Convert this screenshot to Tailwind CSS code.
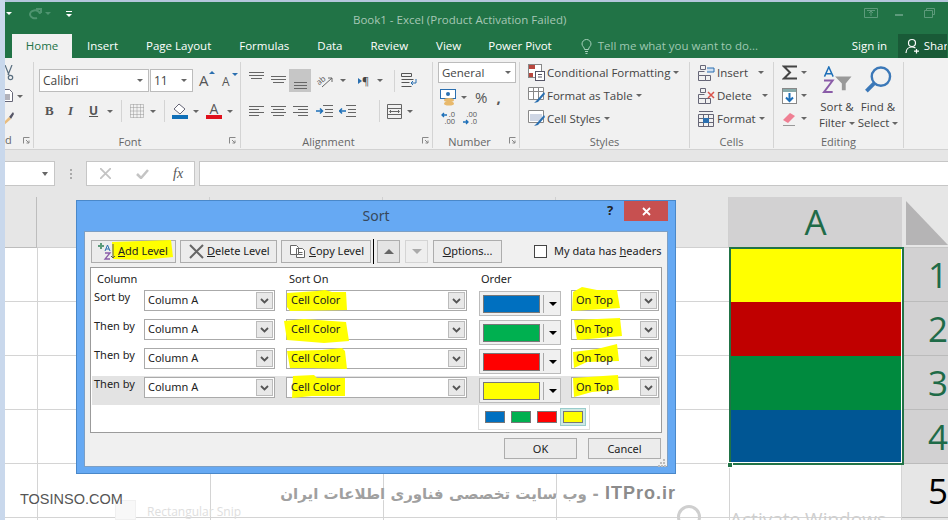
<!DOCTYPE html>
<html lang="en">
<head>
    <meta charset="UTF-8">
    <title>Book1 - Excel</title>
    <script src="https://cdn.jsdelivr.net/npm/@tailwindcss/browser@4"></script>
</head>
<body class="w-[948px] h-[520px] overflow-hidden bg-[#c9d8ec] font-['Open_Sans',sans-serif]">
<div class="relative flex w-[948px] h-[520px] overflow-hidden">
    <!-- desktop strip on the left -->
    <div class="w-[5px] shrink-0 bg-[#c9d8ec]"></div>

    <div class="w-[943px] shrink-0 flex flex-col">
        <div class="h-[2px] shrink-0 bg-[#b4c6dc]"></div>

        <!-- title bar -->
        <div class="h-[32px] shrink-0 bg-[#217346] flex items-center relative">
            <span class="ml-[1px] mt-[-9px] w-0 h-0 border-x-[3px] border-x-transparent border-t-[3px] border-t-white"></span>
            <svg class="ml-[15px] mt-[-9px]" width="15" height="12" viewBox="0 0 15 12" fill="none" stroke="#4f9470" stroke-width="2"><path d="M13 6a5 4 0 1 0-3 4M9 1h5v4"/></svg>
            <span class="ml-[3px] mt-[-9px] w-0 h-0 border-x-[3px] border-x-transparent border-t-[3px] border-t-[#4f9470]"></span>
            <div class="ml-[15px] mt-[-9px] flex flex-col gap-[2px]"><div class="w-[6px] h-[1px] bg-white"></div><span class="w-0 h-0 border-x-[3px] border-x-transparent border-t-[3px] border-t-white"></span></div>
            <div class="ml-[281px] mt-[3px] text-[11.5px] leading-none text-[#a6c7b5] whitespace-nowrap w-[214px]">Book1 - Excel (Product Activation Failed)</div>
            <svg class="ml-[297px] mt-[-10px]" width="14" height="11" viewBox="0 0 14 11" fill="none" stroke="#5d9a7b"><path d="M.5.5h13v9H.5zM7 8V3M5 5l2-2 2 2M3 2.500h8"/></svg>
            <div class="ml-[17px] mt-[-6px] w-[8px] h-[2px] bg-[#5d9a7b]"></div>
            <svg class="ml-[21px] mt-[-10px]" width="11" height="10" viewBox="0 0 11 10" fill="none" stroke="#5d9a7b"><path d="M.5 2.500h8v7h-8zM2.500 2.500V.5h8v6H8.500"/></svg>
        </div>

        <!-- tabs -->
        <div class="h-[24px] shrink-0 bg-[#217346] flex items-stretch text-[11.5px] text-white whitespace-nowrap">
            <div class="ml-[7px] w-[60px] shrink-0 bg-[#f1f1f1] text-[#217346] flex items-center justify-center">Home</div>
            <div class="ml-[15px] shrink-0 flex items-center">Insert</div>
            <div class="ml-[28px] shrink-0 flex items-center">Page Layout</div>
            <div class="ml-[28px] shrink-0 flex items-center">Formulas</div>
            <div class="ml-[28px] shrink-0 flex items-center">Data</div>
            <div class="ml-[28px] shrink-0 flex items-center">Review</div>
            <div class="ml-[28px] shrink-0 flex items-center">View</div>
            <div class="ml-[27px] shrink-0 flex items-center">Power Pivot</div>
            <svg class="ml-[29px] shrink-0 self-center" width="11" height="15" viewBox="0 0 11 15" fill="none" stroke="#a6d0bb"><path d="M3.500 10.500C3.500 8 1 7.500 1 5a4.500 4.500 0 0 1 9 0c0 2.500-2.500 3-2.500 5.500zM4 12.500h3M4.500 14.500h2"/></svg>
            <div class="ml-[6px] w-[160px] shrink-0 flex items-center text-[#9fc8b2]">Tell me what you want to do...</div>
            <div class="ml-[94px] w-[36px] shrink-0 flex items-center">Sign in</div>
            <div class="ml-[10px] w-[49px] shrink-0 bg-[#195a37] flex items-center pl-[7px] overflow-hidden">
                <svg class="shrink-0" width="15" height="16" viewBox="0 0 15 16" fill="none" stroke="white" stroke-width="1.200"><circle cx="7" cy="5" r="3.500"/><path d="M1 15c0-3.500 2.500-6 6-6 1.500 0 2.500.5 3.500 1M11.500 11v4.500M9 13.200h5"/></svg>
                <span class="ml-[4px]">Share</span>
            </div>
        </div>

        <!-- ribbon -->
        <div class="h-[92px] shrink-0 bg-[#f1f1f1] border-b border-[#d2d2d2] flex pt-[4px] text-[11.5px] leading-[14px] text-[#444] whitespace-nowrap">
            <!-- clipboard, cut off by the window edge -->
            <div class="relative w-[29px] h-[86px] border-r border-[#d4d4d4] overflow-hidden">
                <svg class="absolute left-[-1px] top-[3px]" width="10" height="16" viewBox="0 0 10 16" fill="none" stroke="#5a6f80" stroke-width="1.200"><path d="M1 0l4 10M8 0L4 10"/><circle cx="6.500" cy="12.500" r="2.200"/></svg>
                <svg class="absolute left-[-3px] top-[27px]" width="11" height="13" viewBox="0 0 11 13" fill="#fff" stroke="#667"><path d="M.5.5h7l3 3v9H.5zM3 6h5M3 8h5M3 10h5"/></svg>
                <span class="absolute left-[12px] top-[33px] w-0 h-0 border-x-[3px] border-x-transparent border-t-[3px] border-t-[#666]"></span>
                <svg class="absolute left-[-1px] top-[49px]" width="10" height="14" viewBox="0 0 10 14"><path d="M9 1L5 6l2 2 3-5z" fill="#556"/><path d="M5 6L0 11v3l7-6z" fill="#e9bd7e"/></svg>
                <div class="absolute left-0 bottom-[1px] text-[#666] text-[11px]">d</div>
                <svg class="absolute left-[18px] bottom-[4px]" width="7" height="7" viewBox="0 0 7 7" fill="none" stroke="#888"><path d="M.5 6.500v-6h6M3 3l3 3M6 3.500V6H3.500"/></svg>
            </div>

            <!-- font -->
            <div class="relative w-[207px] h-[86px] border-r border-[#d4d4d4] flex flex-col">
                <div class="flex items-center mt-[7px] ml-[5px] h-[23px]">
                    <div class="w-[110px] h-[23px] bg-white border border-[#bcbcbc] flex items-center pl-[3px] text-[12px]">Calibri<span class="ml-auto mr-[5px] w-0 h-0 border-x-[3px] border-x-transparent border-t-[3px] border-t-[#666]"></span></div>
                    <div class="w-[43px] h-[23px] ml-[1px] bg-white border border-[#bcbcbc] flex items-center pl-[3px] text-[12px]">11<span class="ml-auto mr-[5px] w-0 h-0 border-x-[3px] border-x-transparent border-t-[3px] border-t-[#666]"></span></div>
                    <div class="relative ml-[6px] w-[16px] text-[15px] leading-none text-[#555]">A<span class="absolute right-[0px] top-[-2px] w-0 h-0 border-x-[3px] border-x-transparent border-b-[3px] border-b-[#2a6fb0]"></span></div>
                    <div class="relative ml-[7px] w-[14px] mt-[2px] text-[12px] leading-none text-[#555]">A<span class="absolute right-[-2px] top-[-3px] w-0 h-0 border-x-[3px] border-x-transparent border-t-[3px] border-t-[#2a6fb0]"></span></div>
                </div>
                <div class="flex items-center mt-[8px] h-[22px] text-[#555]">
                    <div class="ml-[11px] w-[8px] font-['Liberation_Serif',serif] font-bold text-[13px]">B</div>
                    <div class="ml-[15px] w-[6px] font-['Liberation_Serif',serif] italic font-bold text-[13px]">I</div>
                    <div class="ml-[15px] w-[9px] font-bold text-[12px] underline">U</div>
                    <span class="ml-[9px] w-0 h-0 border-x-[3px] border-x-transparent border-t-[3px] border-t-[#666]"></span>
                    <div class="ml-[8px] w-[1px] h-[22px] bg-[#d4d4d4]"></div>
                    <svg class="ml-[8px]" width="14" height="14" viewBox="0 0 14 14" fill="none" stroke="#999" stroke-dasharray="1 1"><path d="M.5.500h13v13H.500zM7 .5v13M.5 7h13M3.500.5v13M10.500.5v13M.5 3.500h13M.5 10.500h13"/></svg>
                    <span class="ml-[6px] w-0 h-0 border-x-[3px] border-x-transparent border-t-[3px] border-t-[#666]"></span>
                    <div class="ml-[8px] w-[1px] h-[22px] bg-[#d4d4d4]"></div>
                    <svg class="ml-[7px]" width="16" height="16" viewBox="0 0 16 16"><path d="M7 1l6 5-5 5-6-5z" fill="#fff" stroke="#667"/><rect y="12" width="16" height="4" fill="#0f6fb7"/></svg>
                    <span class="ml-[5px] w-0 h-0 border-x-[3px] border-x-transparent border-t-[3px] border-t-[#666]"></span>
                    <div class="ml-[7px] w-[16px] flex flex-col items-center"><span class="text-[14px] leading-[12px] text-[#555]">A</span><div class="w-[16px] h-[4px] bg-[#e0101c]"></div></div>
                    <span class="ml-[5px] w-0 h-0 border-x-[3px] border-x-transparent border-t-[3px] border-t-[#666]"></span>
                </div>
                <div class="mt-auto mb-[-1px] text-center pr-[14px] text-[#666] text-[11px]">Font</div>
                <svg class="absolute left-[195px] bottom-[4px]" width="7" height="7" viewBox="0 0 7 7" fill="none" stroke="#888"><path d="M.5 6.500v-6h6M3 3l3 3M6 3.500V6H3.500"/></svg>
            </div>

            <!-- alignment -->
            <div class="relative w-[192px] h-[86px] border-r border-[#d4d4d4] flex flex-col">
                <div class="flex items-center mt-[7px] h-[23px]">
                    <svg class="ml-[8px]" width="15" height="23" viewBox="0 0 15 23" fill="none" stroke="#666"><path d="M0 3.500h15M0 6.500h15M2 9.500h11"/></svg>
                    <svg class="ml-[7px]" width="15" height="23" viewBox="0 0 15 23" fill="none" stroke="#666"><path d="M0 7.500h15M0 10.500h15M2 13.500h11"/></svg>
                    <div class="ml-[3px] w-[22px] h-[23px] bg-[#c6c6c6] flex justify-center"><svg width="15" height="23" viewBox="0 0 15 23" fill="none" stroke="#666"><path d="M1 13.500h13M1 16.500h13M1 19.500h13"/></svg></div>
                    <svg class="ml-[5px]" width="18" height="15" viewBox="0 0 18 15" fill="none" stroke="#666"><text x="0" y="10" font-size="8" fill="#555" stroke="none" transform="rotate(-40 5 7)">ab</text><path d="M6 14L16 5M16 5v4M16 5h-4"/></svg>
                    <span class="ml-[6px] w-0 h-0 border-x-[3px] border-x-transparent border-t-[3px] border-t-[#666]"></span>
                    <div class="ml-[12px] flex items-center text-[11px] leading-none text-[#444]"><span class="w-0 h-0 border-y-[3px] border-y-transparent border-l-[4px] border-l-[#2a6fb0]"></span>¶</div>
                    <span class="ml-[8px] w-0 h-0 border-x-[3px] border-x-transparent border-t-[3px] border-t-[#666]"></span>
                    <div class="ml-[11px] w-[1px] h-[22px] bg-[#d4d4d4]"></div>
                    <svg class="ml-[6px]" width="17" height="15" viewBox="0 0 17 15" fill="none" stroke="#555"><path d="M.5.5h10v3H.5zM.5 6.500h12M.5 9.500h8M.5 13.500h10" /><path d="M15 6v4h-5M12 8l-2 2 2 2" stroke="#2a6fb0"/></svg>
                </div>
                <div class="flex items-center mt-[8px] h-[22px]">
                    <svg class="ml-[8px]" width="15" height="11" viewBox="0 0 15 11" fill="none" stroke="#666"><path d="M0 .5h15M0 3.500h10M0 6.500h15M0 9.500h10"/></svg>
                    <svg class="ml-[7px]" width="15" height="11" viewBox="0 0 15 11" fill="none" stroke="#666"><path d="M0 .5h15M2 3.500h11M0 6.500h15M2 9.500h11"/></svg>
                    <svg class="ml-[7px]" width="15" height="11" viewBox="0 0 15 11" fill="none" stroke="#666"><path d="M0 .5h15M5 3.500h10M0 6.500h15M5 9.500h10"/></svg>
                    <svg class="ml-[8px]" width="17" height="12" viewBox="0 0 17 12" fill="none" stroke="#666"><path d="M7 .5h10M9 4.500h8M9 7.500h8M7 11.500h10"/><path d="M0 6h6M4 3.500L6.500 6 4 8.500" stroke="#1d6fb8" stroke-width="1.500"/></svg>
                    <svg class="ml-[6px]" width="17" height="12" viewBox="0 0 17 12" fill="none" stroke="#666"><path d="M7 .5h10M9 4.500h8M9 7.500h8M7 11.500h10"/><path d="M7 6H1M3 3.500L.5 6 3 8.500" stroke="#1d6fb8" stroke-width="1.500"/></svg>
                    <div class="ml-[23px] w-[1px] h-[22px] bg-[#d4d4d4]"></div>
                    <svg class="ml-[7px]" width="15" height="15" viewBox="0 0 15 15" fill="none" stroke="#666"><path d="M.5.500h14v14H.500zM.5 4.500h14M.5 10.500h14M3 7.500h9M4 6L2.500 7.500 4 9M11 6l1.500 1.500L11 9"/></svg>
                    <span class="ml-[5px] w-0 h-0 border-x-[3px] border-x-transparent border-t-[3px] border-t-[#666]"></span>
                </div>
                <div class="mt-auto mb-[-1px] text-center pr-[16px] text-[#666] text-[11px]">Alignment</div>
                <svg class="absolute left-[181px] bottom-[4px]" width="7" height="7" viewBox="0 0 7 7" fill="none" stroke="#888"><path d="M.5 6.500v-6h6M3 3l3 3M6 3.500V6H3.500"/></svg>
            </div>

            <!-- number -->
            <div class="relative w-[87px] h-[86px] border-r border-[#d4d4d4] flex flex-col">
                <div class="ml-[5px] w-[78px] h-[21px] bg-white border border-[#bcbcbc] flex items-center pl-[3px] text-[11.5px]">General<span class="ml-auto mr-[4px] w-0 h-0 border-x-[3px] border-x-transparent border-t-[3px] border-t-[#666]"></span></div>
                <div class="flex items-center h-[22px] mt-[3px]">
                    <svg class="ml-[7px]" width="17" height="17" viewBox="0 0 17 17"><rect x=".5" y=".5" width="15" height="9" fill="#fff" stroke="#2a6fb0"/><circle cx="8" cy="5" r="2" fill="#2a6fb0"/><ellipse cx="9" cy="11" rx="5" ry="2" fill="#e8b96c"/><ellipse cx="9" cy="14.500" rx="5" ry="2" fill="#e8b96c"/></svg>
                    <span class="ml-[4px] w-0 h-0 border-x-[3px] border-x-transparent border-t-[3px] border-t-[#666]"></span>
                    <div class="ml-[8px] text-[15px] leading-none text-[#555]">%</div>
                    <div class="ml-[9px] text-[15px] leading-none font-bold text-[#555]">,</div>
                </div>
                <div class="flex items-center h-[16px] mt-[2px] text-[7.5px] leading-[7px] text-[#555]">
                    <div class="ml-[8px] w-[14px] flex flex-col">
                        <div class="flex items-center justify-between"><svg width="6" height="6" viewBox="0 0 6 6" fill="none" stroke="#1d6fb8" stroke-width="1.300"><path d="M6 3H1M3 1L1 3l2 2"/></svg><span>.0</span></div>
                        <div class="text-right">.00</div>
                    </div>
                    <div class="ml-[8px] w-[14px] flex flex-col">
                        <div class="text-right">.00</div>
                        <div class="flex items-center justify-between"><svg width="6" height="6" viewBox="0 0 6 6" fill="none" stroke="#1d6fb8" stroke-width="1.300"><path d="M0 3h5M3 1l2 2-2 2"/></svg><span>.0</span></div>
                    </div>
                </div>
                <div class="mt-auto mb-[-1px] text-center pr-[13px] text-[#666] text-[11px]">Number</div>
                <svg class="absolute left-[76px] bottom-[4px]" width="7" height="7" viewBox="0 0 7 7" fill="none" stroke="#888"><path d="M.5 6.500v-6h6M3 3l3 3M6 3.500V6H3.500"/></svg>
            </div>

            <!-- styles -->
            <div class="w-[170px] h-[86px] border-r border-[#d4d4d4] flex flex-col pl-[8px]">
                <div class="flex items-center h-[23px] mt-[-1px]">
                    <svg width="17" height="17" viewBox="0 0 17 17"><rect x=".5" y=".5" width="13" height="13" fill="#fff" stroke="#888"/><rect x="1" y="1" width="6" height="4" fill="#b8473e"/><rect x="1" y="9" width="4" height="4" fill="#b8473e"/><rect x="7.500" y="7.500" width="9" height="9" fill="#fff" stroke="#556"/><path d="M10 10.500h4M10 13h4" stroke="#556"/></svg>
                    <span class="ml-[2px]">Conditional Formatting</span><span class="ml-[3px] w-0 h-0 border-x-[3px] border-x-transparent border-t-[3px] border-t-[#666]"></span>
                </div>
                <div class="flex items-center h-[23px]">
                    <svg width="17" height="17" viewBox="0 0 17 17"><path d="M.5.500h15v12H.500zM.5 4.500h15M5.500.5v12M10.500.5v12" fill="#fff" stroke="#888"/><path d="M16 5l-7 8-3 3 4-1 7-8z" fill="#2a6fb0"/></svg>
                    <span class="ml-[2px]">Format as Table</span><span class="ml-[3px] w-0 h-0 border-x-[3px] border-x-transparent border-t-[3px] border-t-[#666]"></span>
                </div>
                <div class="flex items-center h-[23px]">
                    <svg width="17" height="17" viewBox="0 0 17 17"><path d="M.5.500h15v12H.500z" fill="#fff" stroke="#888"/><rect x="2" y="4" width="12" height="7" fill="#cfd6e4"/><path d="M16 5l-7 8-3 3 4-1 7-8z" fill="#2a6fb0"/></svg>
                    <span class="ml-[2px]">Cell Styles</span><span class="ml-[3px] w-0 h-0 border-x-[3px] border-x-transparent border-t-[3px] border-t-[#666]"></span>
                </div>
                <div class="mt-auto mb-[-1px] text-center pr-[8px] text-[#666] text-[11px]">Styles</div>
            </div>

            <!-- cells -->
            <div class="w-[84px] h-[86px] border-r border-[#d4d4d4] flex flex-col pl-[8px]">
                <div class="flex items-center h-[23px] mt-[-1px]">
                    <svg width="17" height="16" viewBox="0 0 17 16" fill="none" stroke="#667"><path d="M2.500.5h5v4h-5zM.5 10.500h7v5h-7zM7.500 10.500h5v5h-5zM.5 10.500v-4h6"/><path d="M9 3h7v4H9" fill="#cfe0f2" stroke="#2a6fb0"/></svg>
                    <span class="ml-[2px]">Insert</span><span class="ml-[10px] w-0 h-0 border-x-[3px] border-x-transparent border-t-[3px] border-t-[#666]"></span>
                </div>
                <div class="flex items-center h-[23px]">
                    <svg width="17" height="16" viewBox="0 0 17 16" fill="none" stroke="#667"><path d="M2.500.5h5v4h-5zM.5 10.500h7v5h-7zM7.500 10.500h5v5h-5zM.5 10.500v-4h6"/><path d="M10 4l6 6M16 4l-6 6" stroke="#d9534a" stroke-width="1.500"/></svg>
                    <span class="ml-[2px]">Delete</span><span class="ml-[10px] w-0 h-0 border-x-[3px] border-x-transparent border-t-[3px] border-t-[#666]"></span>
                </div>
                <div class="flex items-center h-[23px]">
                    <svg width="17" height="17" viewBox="0 0 17 17" fill="none" stroke="#667"><path d="M.5 4.500h15v12H.500zM.5 8.500h15M.5 12.500h15M5.500 4.500v12M10.500 4.500v12M1 1.500h14"/><rect x="5" y="8" width="6" height="5" fill="#2a6fb0" stroke="none"/></svg>
                    <span class="ml-[2px]">Format</span><span class="ml-[3px] w-0 h-0 border-x-[3px] border-x-transparent border-t-[3px] border-t-[#666]"></span>
                </div>
                <div class="mt-auto mb-[-1px] text-center pr-[8px] text-[#666] text-[11px]">Cells</div>
            </div>

            <!-- editing -->
            <div class="relative w-[130px] h-[86px] border-r border-[#d4d4d4] flex flex-col">
                <div class="flex">
                    <div class="w-[42px] pl-[8px] flex flex-col">
                        <div class="flex items-center h-[23px] mt-[-1px]"><svg width="15" height="15" viewBox="0 0 15 15" fill="none" stroke="#444" stroke-width="2"><path d="M15 1.500H2L8 7.500 2 13.500H15"/></svg><span class="ml-[4px] w-0 h-0 border-x-[3px] border-x-transparent border-t-[3px] border-t-[#666]"></span></div>
                        <div class="flex items-center h-[23px]"><svg width="15" height="16" viewBox="0 0 15 16"><rect x=".5" y=".5" width="14" height="15" fill="#fff" stroke="#888"/><rect x="1" y="1" width="13" height="3" fill="#8aa"/><path d="M7.500 5v8M4 9.500l3.500 3.500L11 9.500" fill="none" stroke="#1d6fb8" stroke-width="2"/></svg><span class="ml-[4px] w-0 h-0 border-x-[3px] border-x-transparent border-t-[3px] border-t-[#666]"></span></div>
                        <div class="flex items-center h-[23px]"><svg width="15" height="14" viewBox="0 0 15 14"><path d="M1 8l7-7 5 3-7 7z" fill="#ef7f93"/><path d="M1 13.500h12" stroke="#999"/></svg><span class="ml-[4px] w-0 h-0 border-x-[3px] border-x-transparent border-t-[3px] border-t-[#666]"></span></div>
                    </div>
                    <div class="w-[42px] mt-[4px] flex flex-col items-center">
                        <svg width="31" height="28" viewBox="0 0 31 29"><path d="M2 11L6.500 1 11 11M3.500 8h6" fill="none" stroke="#1d6fb8" stroke-width="1.500"/><path d="M1.500 15h9l-9 12h9" fill="none" stroke="#8a5ca8" stroke-width="2"/><path d="M13 11h17l-6 7v7h-4v-7z" fill="#999"/></svg>
                        <div class="mt-[5px] leading-[16px] text-center">Sort &amp;<br>Filter<span class="inline-block ml-[3px] mb-[2px] w-0 h-0 border-x-[3px] border-x-transparent border-t-[3px] border-t-[#666]"></span></div>
                    </div>
                    <div class="w-[40px] mt-[4px] flex flex-col items-center">
                        <svg width="30" height="28" viewBox="0 0 30 29" fill="none" stroke="#3b78b8"><circle cx="18" cy="11" r="9.500" stroke-width="2.500"/><path d="M11 18L3 26" stroke-width="4"/></svg>
                        <div class="mt-[5px] leading-[16px] text-center">Find &amp;<br>Select<span class="inline-block ml-[3px] mb-[2px] w-0 h-0 border-x-[3px] border-x-transparent border-t-[3px] border-t-[#666]"></span></div>
                    </div>
                </div>
                <div class="mt-auto mb-[-1px] text-center text-[#666] text-[11px]">Editing</div>
            </div>
        </div>

        <!-- formula bar -->
        <div class="h-[40px] bg-[#e6e6e6] flex pt-[11px] shrink-0">
            <div class="w-[50px] h-[25px] bg-white border-y border-r border-[#c6c6c6] flex items-center justify-end pr-[6px]"><span class="w-0 h-0 border-x-[3.500px] border-x-transparent border-t-[4px] border-t-[#666]"></span></div>
            <div class="w-[31px] h-[25px] flex flex-col items-center justify-center gap-[2px]"><div class="w-[2px] h-[2px] bg-[#aaa]"></div><div class="w-[2px] h-[2px] bg-[#aaa]"></div><div class="w-[2px] h-[2px] bg-[#aaa]"></div></div>
            <div class="w-[109px] h-[25px] bg-white border border-[#c6c6c6] flex items-center">
                <svg class="ml-[13px]" width="11" height="11" viewBox="0 0 11 11" fill="none" stroke="#c4c4c4" stroke-width="1.800"><path d="M0 0l11 11M11 0L0 11"/></svg>
                <svg class="ml-[25px]" width="13" height="10" viewBox="0 0 13 10" fill="none" stroke="#c4c4c4" stroke-width="2.500"><path d="M1 5l4 4 7-8"/></svg>
                <span class="ml-[24px] font-['Liberation_Serif',serif] italic text-[14px] leading-none text-[#555]">fx</span>
            </div>
            <div class="ml-[4px] w-[749px] h-[25px] bg-white border-y border-l border-[#c6c6c6]"></div>
        </div>

        <!-- sheet -->
        <div class="h-[7px] bg-[#e6e6e6] shrink-0"></div>
        <div class="grid grid-cols-[32px_173px_173px_173px_173px_173px_46px] grid-rows-[51px_54px_54px_54px_54px_54px_4px] shrink-0 bg-white">
            <div class="bg-[#e6e6e6] border-r border-b border-[#bdbdbd]"></div>
            <div class="bg-[#e6e6e6] border-r border-b border-[#d0d0d0]"></div>
            <div class="bg-[#e6e6e6] border-r border-b border-[#d0d0d0]"></div>
            <div class="bg-[#e6e6e6] border-r border-b border-[#d0d0d0]"></div>
            <div class="bg-[#e6e6e6] border-r border-b border-[#d0d0d0]"></div>
            <div class="bg-[#d2d1d2] text-[#1f6b48] text-[35px] leading-[50px] text-center">A</div>
            <div class="bg-[#e6e6e6] pl-[4px] pt-[4px] border-b border-[#c6c6c6]"><div class="w-[42px] h-[44px] bg-[#b5b4b5] [clip-path:polygon(0_0,100%_100%,0_100%)]"></div></div>

            <div class="border-b border-[#d4d4d4]"></div><div class="border-l border-b border-[#d4d4d4]"></div><div class="border-l border-b border-[#d4d4d4]"></div><div class="border-l border-b border-[#d4d4d4]"></div><div class="border-l border-b border-[#d4d4d4]"></div>
            <div class="bg-[#ffff00]"></div>
            <div class="bg-[#d2d1d2] border-b border-[#bbb] text-[#1f6b48] text-[35px] leading-[54px] text-center pl-[26px] overflow-hidden">1</div>

            <div class="border-b border-[#d4d4d4]"></div><div class="border-l border-b border-[#d4d4d4]"></div><div class="border-l border-b border-[#d4d4d4]"></div><div class="border-l border-b border-[#d4d4d4]"></div><div class="border-l border-b border-[#d4d4d4]"></div>
            <div class="bg-[#c00000]"></div>
            <div class="bg-[#d2d1d2] border-b border-[#bbb] text-[#1f6b48] text-[35px] leading-[54px] text-center pl-[26px] overflow-hidden">2</div>

            <div class="border-b border-[#d4d4d4]"></div><div class="border-l border-b border-[#d4d4d4]"></div><div class="border-l border-b border-[#d4d4d4]"></div><div class="border-l border-b border-[#d4d4d4]"></div><div class="border-l border-b border-[#d4d4d4]"></div>
            <div class="bg-[#008a3e]"></div>
            <div class="bg-[#d2d1d2] border-b border-[#bbb] text-[#1f6b48] text-[35px] leading-[54px] text-center pl-[26px] overflow-hidden">3</div>

            <div class="border-b border-[#d4d4d4]"></div><div class="border-l border-b border-[#d4d4d4]"></div><div class="border-l border-b border-[#d4d4d4]"></div><div class="border-l border-b border-[#d4d4d4]"></div><div class="border-l border-b border-[#d4d4d4]"></div>
            <div class="bg-[#005694]"></div>
            <div class="bg-[#d2d1d2] border-b border-[#bbb] text-[#1f6b48] text-[35px] leading-[54px] text-center pl-[26px] overflow-hidden">4</div>

            <div class="border-b border-[#d4d4d4]"></div><div class="border-l border-b border-[#d4d4d4]"></div><div class="border-l border-b border-[#d4d4d4]"></div><div class="border-l border-b border-[#d4d4d4]"></div><div class="border-l border-b border-[#d4d4d4]"></div>
            <div class="border-l border-r border-b border-[#d4d4d4]"></div>
            <div class="bg-[#e6e6e6] border-b border-[#bbb] text-black text-[35px] leading-[54px] text-center pl-[26px] overflow-hidden">5</div>
            <div></div><div class="border-l border-[#d4d4d4]"></div><div class="border-l border-[#d4d4d4]"></div><div class="border-l border-[#d4d4d4]"></div><div class="border-l border-[#d4d4d4]"></div><div class="border-l border-r border-[#d4d4d4]"></div><div class="bg-[#e6e6e6]"></div>
        </div>
    </div>

    <!-- selection around A1:A4 -->
    <div class="absolute left-[729px] top-[247px] w-[175px] h-[218px] border-2 border-[#217346]"><div class="w-full h-full border-r border-b border-white"></div></div>
    <div class="absolute left-[727px] top-[462px] w-[6px] h-[6px] bg-[#217346] border border-white"></div>

    <!-- faint things behind the watermark -->
    <div class="absolute left-[115px] top-[500px] w-[21px] h-[20px] bg-[#f8f8f8] border border-[#f0f0f0]"></div>
    <div class="absolute left-[147px] top-[503px] text-[12px] text-[#dedede] whitespace-nowrap">Rectangular Snip</div>
    <div class="absolute left-[677px] top-[505px] w-[24px] h-[24px] rounded-full border-[3px] border-[#cfcfcf]"></div>
    <div class="absolute left-[730px] top-[505px] text-[19px] text-[#cfcfcf] whitespace-nowrap">Activate Windows</div>

    <!-- watermark -->
    <div class="absolute left-[20px] top-[491px] font-['Liberation_Sans',sans-serif] text-[14.500px] leading-[16px] text-[#555] [text-shadow:0_0_2px_white] whitespace-nowrap">TOSINSO.COM</div>
    <div class="absolute left-[275px] top-[481px] w-[401px] text-[15px] leading-[24px] text-[#a0a0a0] font-['DejaVu_Sans',sans-serif] font-bold tracking-[0.5px] [text-shadow:1px_1px_1px_white] whitespace-nowrap" dir="rtl"><span dir="ltr" class="font-['Liberation_Sans',sans-serif] text-[18px] tracking-[1px] text-[#8c8c8c]">ITPro.ir</span> - وب سایت تخصصی فناوری اطلاعات ایران</div>

    <!-- sort dialog -->
    <div class="absolute left-[76px] top-[200px] w-[600px] h-[274px] bg-[#66a9f3] border border-[#4a88c9] flex flex-col font-['Noto_Sans',sans-serif] text-[11px] leading-[14px] text-[#222] whitespace-nowrap">
        <div class="h-[30px] relative shrink-0 flex justify-center items-center text-[14px] text-[#36475a]">
            Sort
            <div class="absolute left-[530px] top-[2px] text-[13px] font-bold text-[#222]">?</div>
            <div class="absolute left-[547px] top-0 w-[44px] h-[20px] bg-[#c75050] flex items-center justify-center"><svg width="9" height="9" viewBox="0 0 9 9" fill="none" stroke="white" stroke-width="1.800"><path d="M1 1l7 7M8 1L1 8"/></svg></div>
        </div>
        <div class="mx-[7px] w-[584px] h-[236px] bg-[#f0f0f0] border border-[#7d9fc4] pt-[7px] pl-[5px] flex flex-col">
            <div class="flex items-center h-[24px] pl-[1px]">
                <div class="relative w-[85px] h-[23px] bg-[#ececec] border border-[#adadad] flex items-center">
                    <svg class="absolute left-[20px] top-[-1px] z-0" width="61" height="20" viewBox="0 0 61 20"><path d="M0 2 L59 0 L61 17 L30 20 L1 19 Z" fill="#ffff00"/></svg>
                    <svg class="relative ml-[6px]" width="17" height="18" viewBox="0 0 17 18" fill="none"><path d="M3 1v6M0 4h6" stroke="#5b9a7a" stroke-width="2"/><path d="M7 9L9.500 3 12 9M8 7h3" stroke="#2a6fb0"/><path d="M7 11h5l-5 6h5" stroke="#8a5ca8" stroke-width="1.300"/><path d="M15 2v14M13 14l2 2 2-2" stroke="#555"/></svg>
                    <span class="relative ml-[3px]"><span class="underline">A</span>dd Level</span>
                </div>
                <div class="ml-[4px] w-[97px] h-[23px] bg-[#ececec] border border-[#adadad] flex items-center">
                    <svg class="ml-[8px]" width="15" height="15" viewBox="0 0 15 15" fill="none" stroke="#666" stroke-width="2"><path d="M1 1l13 13M14 1L1 14"/></svg>
                    <span class="ml-[3px]"><span class="underline">D</span>elete Level</span>
                </div>
                <div class="ml-[4px] w-[90px] h-[23px] bg-[#ececec] border border-[#adadad] flex items-center">
                    <svg class="ml-[8px]" width="15" height="13" viewBox="0 0 15 13" fill="#fff" stroke="#666"><path d="M.5.500h6l2 2v7h-8zM6.500 3.500h6l2 2v7h-8z"/><path d="M8.500 7.500h4M8.500 9.500h4"/></svg>
                    <span class="ml-[4px]"><span class="underline">C</span>opy Level</span>
                </div>
                <div class="ml-[2px] w-[1px] h-[25px] bg-black"></div>
                <div class="ml-[3px] w-[23px] h-[23px] bg-[#e4e4e4] border border-[#adadad] flex items-center justify-center"><span class="w-0 h-0 border-x-[5px] border-x-transparent border-b-[5px] border-b-[#666]"></span></div>
                <div class="ml-[5px] w-[23px] h-[23px] bg-[#eee] border border-[#d4d4d4] flex items-center justify-center"><span class="w-0 h-0 border-x-[5px] border-x-transparent border-t-[5px] border-t-[#aaa]"></span></div>
                <div class="ml-[5px] w-[69px] h-[23px] bg-[#ececec] border border-[#adadad] flex items-center justify-center"><span><span class="underline">O</span>ptions...</span></div>
                <div class="ml-[32px] w-[13px] h-[13px] bg-white border border-[#444]"></div>
                <div class="ml-[7px]">My data has <span class="underline">h</span>eaders</div>
            </div>

            <!-- sort levels -->
            <div class="mt-[4px] w-[572px] h-[166px] bg-white border border-[#9b9b9b] shrink-0">
                <div class="h-[21px] flex items-center">
                    <div class="ml-[6px] w-[192px]">Column</div>
                    <div class="w-[192px]">Sort On</div>
                    <div>Order</div>
                </div>

                <div class="h-[29px] mx-[1px] pt-[1px] flex items-start">
                    <div class="pl-[2px] w-[52px]">Sort by</div>
                    <div class="w-[131px] h-[21px] bg-white border border-[#aaa] flex items-center pl-[3px]"><span class="mt-[-2px]">Column A</span><span class="ml-auto mr-[1px] w-[17px] h-[17px] bg-[#e8e8e8] border border-[#bbb] flex items-center justify-center"><svg width="9" height="6" viewBox="0 0 9 6" fill="none" stroke="#555" stroke-width="1.800"><path d="M1 1l3.500 3.500L8 1"/></svg></span></div>
                    <div class="relative ml-[11px] w-[181px] h-[21px] bg-white border border-[#aaa] flex items-center pl-[4px]">
                        <svg class="absolute left-[0px] top-[-1px]" width="60" height="22" viewBox="0 0 60 22"><path d="M0 3 L30 1 L38 0 L45 2 L59 2 L60 20 L3 21 L0 17 Z" fill="#ffff00"/></svg>
                        <span class="relative mt-[-2px]">Cell Color</span><span class="ml-auto mr-[1px] w-[17px] h-[17px] bg-[#e8e8e8] border border-[#bbb] flex items-center justify-center"><svg width="9" height="6" viewBox="0 0 9 6" fill="none" stroke="#555" stroke-width="1.800"><path d="M1 1l3.500 3.500L8 1"/></svg></span>
                    </div>
                    <div class="ml-[12px] w-[82px] h-[25px] mt-[1px] bg-[#f0f0f0] border border-[#bbb] flex items-center pl-[3px]"><div class="w-[57px] h-[18px] bg-[#0070c0] border border-[#777]"></div><div class="ml-[3px] w-[1px] h-[18px] bg-[#aaa]"></div><span class="ml-[5px] w-0 h-0 border-x-[4px] border-x-transparent border-t-[4px] border-t-black"></span></div>
                    <div class="relative ml-[10px] w-[88px] h-[21px] bg-white border border-[#aaa] flex items-center pl-[4px]">
                        <svg class="absolute left-0 top-[-4px]" width="50" height="24" viewBox="0 0 50 24"><path d="M1 5 L10 0 L25 3 L45 3 L48 21 L0 24 Z" fill="#ffff00"/></svg>
                        <span class="relative mt-[-2px]">On Top</span><span class="ml-auto mr-[1px] w-[17px] h-[17px] bg-[#e8e8e8] border border-[#bbb] flex items-center justify-center"><svg width="9" height="6" viewBox="0 0 9 6" fill="none" stroke="#555" stroke-width="1.800"><path d="M1 1l3.500 3.500L8 1"/></svg></span>
                    </div>
                </div>

                <div class="h-[29px] mx-[1px] pt-[1px] flex items-start">
                    <div class="pl-[2px] w-[52px]">Then by</div>
                    <div class="w-[131px] h-[21px] bg-white border border-[#aaa] flex items-center pl-[3px]"><span class="mt-[-2px]">Column A</span><span class="ml-auto mr-[1px] w-[17px] h-[17px] bg-[#e8e8e8] border border-[#bbb] flex items-center justify-center"><svg width="9" height="6" viewBox="0 0 9 6" fill="none" stroke="#555" stroke-width="1.800"><path d="M1 1l3.500 3.500L8 1"/></svg></span></div>
                    <div class="relative ml-[11px] w-[181px] h-[21px] bg-white border border-[#aaa] flex items-center pl-[4px]">
                        <svg class="absolute left-[-3px] top-[-1px]" width="65" height="24" viewBox="0 0 65 24"><path d="M0 2 L20 0 L62 3 L65 22 L40 24 L3 21 Z" fill="#ffff00"/></svg>
                        <span class="relative mt-[-2px]">Cell Color</span><span class="ml-auto mr-[1px] w-[17px] h-[17px] bg-[#e8e8e8] border border-[#bbb] flex items-center justify-center"><svg width="9" height="6" viewBox="0 0 9 6" fill="none" stroke="#555" stroke-width="1.800"><path d="M1 1l3.500 3.500L8 1"/></svg></span>
                    </div>
                    <div class="ml-[12px] w-[82px] h-[25px] mt-[1px] bg-[#f0f0f0] border border-[#bbb] flex items-center pl-[3px]"><div class="w-[57px] h-[18px] bg-[#00b050] border border-[#777]"></div><div class="ml-[3px] w-[1px] h-[18px] bg-[#aaa]"></div><span class="ml-[5px] w-0 h-0 border-x-[4px] border-x-transparent border-t-[4px] border-t-black"></span></div>
                    <div class="relative ml-[10px] w-[88px] h-[21px] bg-white border border-[#aaa] flex items-center pl-[4px]">
                        <svg class="absolute left-[2px] top-[-2px]" width="48" height="22" viewBox="0 0 48 22"><path d="M0 2 L46 0 L48 18 L3 22 Z" fill="#ffff00"/></svg>
                        <span class="relative mt-[-2px]">On Top</span><span class="ml-auto mr-[1px] w-[17px] h-[17px] bg-[#e8e8e8] border border-[#bbb] flex items-center justify-center"><svg width="9" height="6" viewBox="0 0 9 6" fill="none" stroke="#555" stroke-width="1.800"><path d="M1 1l3.500 3.500L8 1"/></svg></span>
                    </div>
                </div>

                <div class="h-[29px] mx-[1px] pt-[1px] flex items-start">
                    <div class="pl-[2px] w-[52px]">Then by</div>
                    <div class="w-[131px] h-[21px] bg-white border border-[#aaa] flex items-center pl-[3px]"><span class="mt-[-2px]">Column A</span><span class="ml-auto mr-[1px] w-[17px] h-[17px] bg-[#e8e8e8] border border-[#bbb] flex items-center justify-center"><svg width="9" height="6" viewBox="0 0 9 6" fill="none" stroke="#555" stroke-width="1.800"><path d="M1 1l3.500 3.500L8 1"/></svg></span></div>
                    <div class="relative ml-[11px] w-[181px] h-[21px] bg-white border border-[#aaa] flex items-center pl-[4px]">
                        <svg class="absolute left-0 top-[-1px]" width="60" height="22" viewBox="0 0 60 22"><path d="M0 3 L35 2 L55 0 L58 3 L60 21 L25 20 L3 20 Z" fill="#ffff00"/></svg>
                        <span class="relative mt-[-2px]">Cell Color</span><span class="ml-auto mr-[1px] w-[17px] h-[17px] bg-[#e8e8e8] border border-[#bbb] flex items-center justify-center"><svg width="9" height="6" viewBox="0 0 9 6" fill="none" stroke="#555" stroke-width="1.800"><path d="M1 1l3.500 3.500L8 1"/></svg></span>
                    </div>
                    <div class="ml-[12px] w-[82px] h-[25px] mt-[1px] bg-[#f0f0f0] border border-[#bbb] flex items-center pl-[3px]"><div class="w-[57px] h-[18px] bg-[#ff0000] border border-[#777]"></div><div class="ml-[3px] w-[1px] h-[18px] bg-[#aaa]"></div><span class="ml-[5px] w-0 h-0 border-x-[4px] border-x-transparent border-t-[4px] border-t-black"></span></div>
                    <div class="relative ml-[10px] w-[88px] h-[21px] bg-white border border-[#aaa] flex items-center pl-[4px]">
                        <svg class="absolute left-0 top-[-5px]" width="48" height="24" viewBox="0 0 48 24"><path d="M1 8 L25 5 L45 0 L47 17 L15 18 L2 24 Z" fill="#ffff00"/></svg>
                        <span class="relative mt-[-2px]">On Top</span><span class="ml-auto mr-[1px] w-[17px] h-[17px] bg-[#e8e8e8] border border-[#bbb] flex items-center justify-center"><svg width="9" height="6" viewBox="0 0 9 6" fill="none" stroke="#555" stroke-width="1.800"><path d="M1 1l3.500 3.500L8 1"/></svg></span>
                    </div>
                </div>

                <div class="h-[29px] mx-[1px] pt-[1px] flex items-start bg-[#e3e3e3]">
                    <div class="pl-[2px] w-[52px]">Then by</div>
                    <div class="w-[131px] h-[21px] bg-white border border-[#aaa] flex items-center pl-[3px]"><span class="mt-[-2px]">Column A</span><span class="ml-auto mr-[1px] w-[17px] h-[17px] bg-[#e8e8e8] border border-[#bbb] flex items-center justify-center"><svg width="9" height="6" viewBox="0 0 9 6" fill="none" stroke="#555" stroke-width="1.800"><path d="M1 1l3.500 3.500L8 1"/></svg></span></div>
                    <div class="relative ml-[11px] w-[181px] h-[21px] bg-white border border-[#aaa] flex items-center pl-[4px]">
                        <svg class="absolute left-[5px] top-[-3px]" width="53" height="23" viewBox="0 0 53 23"><path d="M1 1 L22 0 L25 3 L53 3 L53 21 L20 21 L0 23 Z" fill="#ffff00"/></svg>
                        <span class="relative mt-[-2px]">Cell Color</span><span class="ml-auto mr-[1px] w-[17px] h-[17px] bg-[#e8e8e8] border border-[#bbb] flex items-center justify-center"><svg width="9" height="6" viewBox="0 0 9 6" fill="none" stroke="#555" stroke-width="1.800"><path d="M1 1l3.500 3.500L8 1"/></svg></span>
                    </div>
                    <div class="ml-[12px] w-[82px] h-[25px] mt-[1px] bg-[#f0f0f0] border border-[#bbb] flex items-center pl-[3px]"><div class="w-[57px] h-[18px] bg-[#ffff00] border border-[#777]"></div><div class="ml-[3px] w-[1px] h-[18px] bg-[#aaa]"></div><span class="ml-[5px] w-0 h-0 border-x-[4px] border-x-transparent border-t-[4px] border-t-black"></span></div>
                    <div class="relative ml-[10px] w-[88px] h-[21px] bg-white border border-[#aaa] flex items-center pl-[4px]">
                        <svg class="absolute left-0 top-[-3px]" width="47" height="22" viewBox="0 0 47 22"><path d="M1 3 L46 0 L47 15 L20 17 L2 22 Z" fill="#ffff00"/></svg>
                        <span class="relative mt-[-2px]">On Top</span><span class="ml-auto mr-[1px] w-[17px] h-[17px] bg-[#e8e8e8] border border-[#bbb] flex items-center justify-center"><svg width="9" height="6" viewBox="0 0 9 6" fill="none" stroke="#555" stroke-width="1.800"><path d="M1 1l3.500 3.500L8 1"/></svg></span>
                    </div>
                </div>

                <!-- colour list of the open dropdown -->
                <div class="ml-[387px] w-[112px] h-[25px] border border-[#ddd] border-t-0 bg-white flex items-center pl-[6px]">
                    <div class="w-[20px] h-[12px] bg-[#0070c0] border border-[#777]"></div>
                    <div class="ml-[6px] w-[20px] h-[12px] bg-[#00b050] border border-[#777]"></div>
                    <div class="ml-[6px] w-[20px] h-[12px] bg-[#ff0000] border border-[#777]"></div>
                    <div class="ml-[3px] w-[26px] h-[18px] bg-[#cfe9e3] border border-[#9cc] flex items-center justify-center"><div class="w-[20px] h-[12px] bg-[#ffff00] border border-[#777]"></div></div>
                </div>
            </div>

            <div class="mt-[5px] flex pl-[414px]">
                <div class="w-[73px] h-[21px] bg-[#ececec] border border-[#adadad] flex items-center justify-center">OK</div>
                <div class="ml-[11px] w-[73px] h-[21px] bg-[#ececec] border border-[#adadad] flex items-center justify-center">Cancel</div>
            </div>
        </div>
    </div>
    <svg class="absolute left-[658px] top-[459px]" width="8" height="8" viewBox="0 0 8 8" fill="#bbb"><rect x="5" y="0" width="2" height="2"/><rect x="2" y="3" width="2" height="2"/><rect x="5" y="3" width="2" height="2"/><rect x="0" y="6" width="2" height="2"/><rect x="3" y="6" width="2" height="2"/><rect x="6" y="6" width="2" height="2"/></svg>
</div>
</body>
</html>
